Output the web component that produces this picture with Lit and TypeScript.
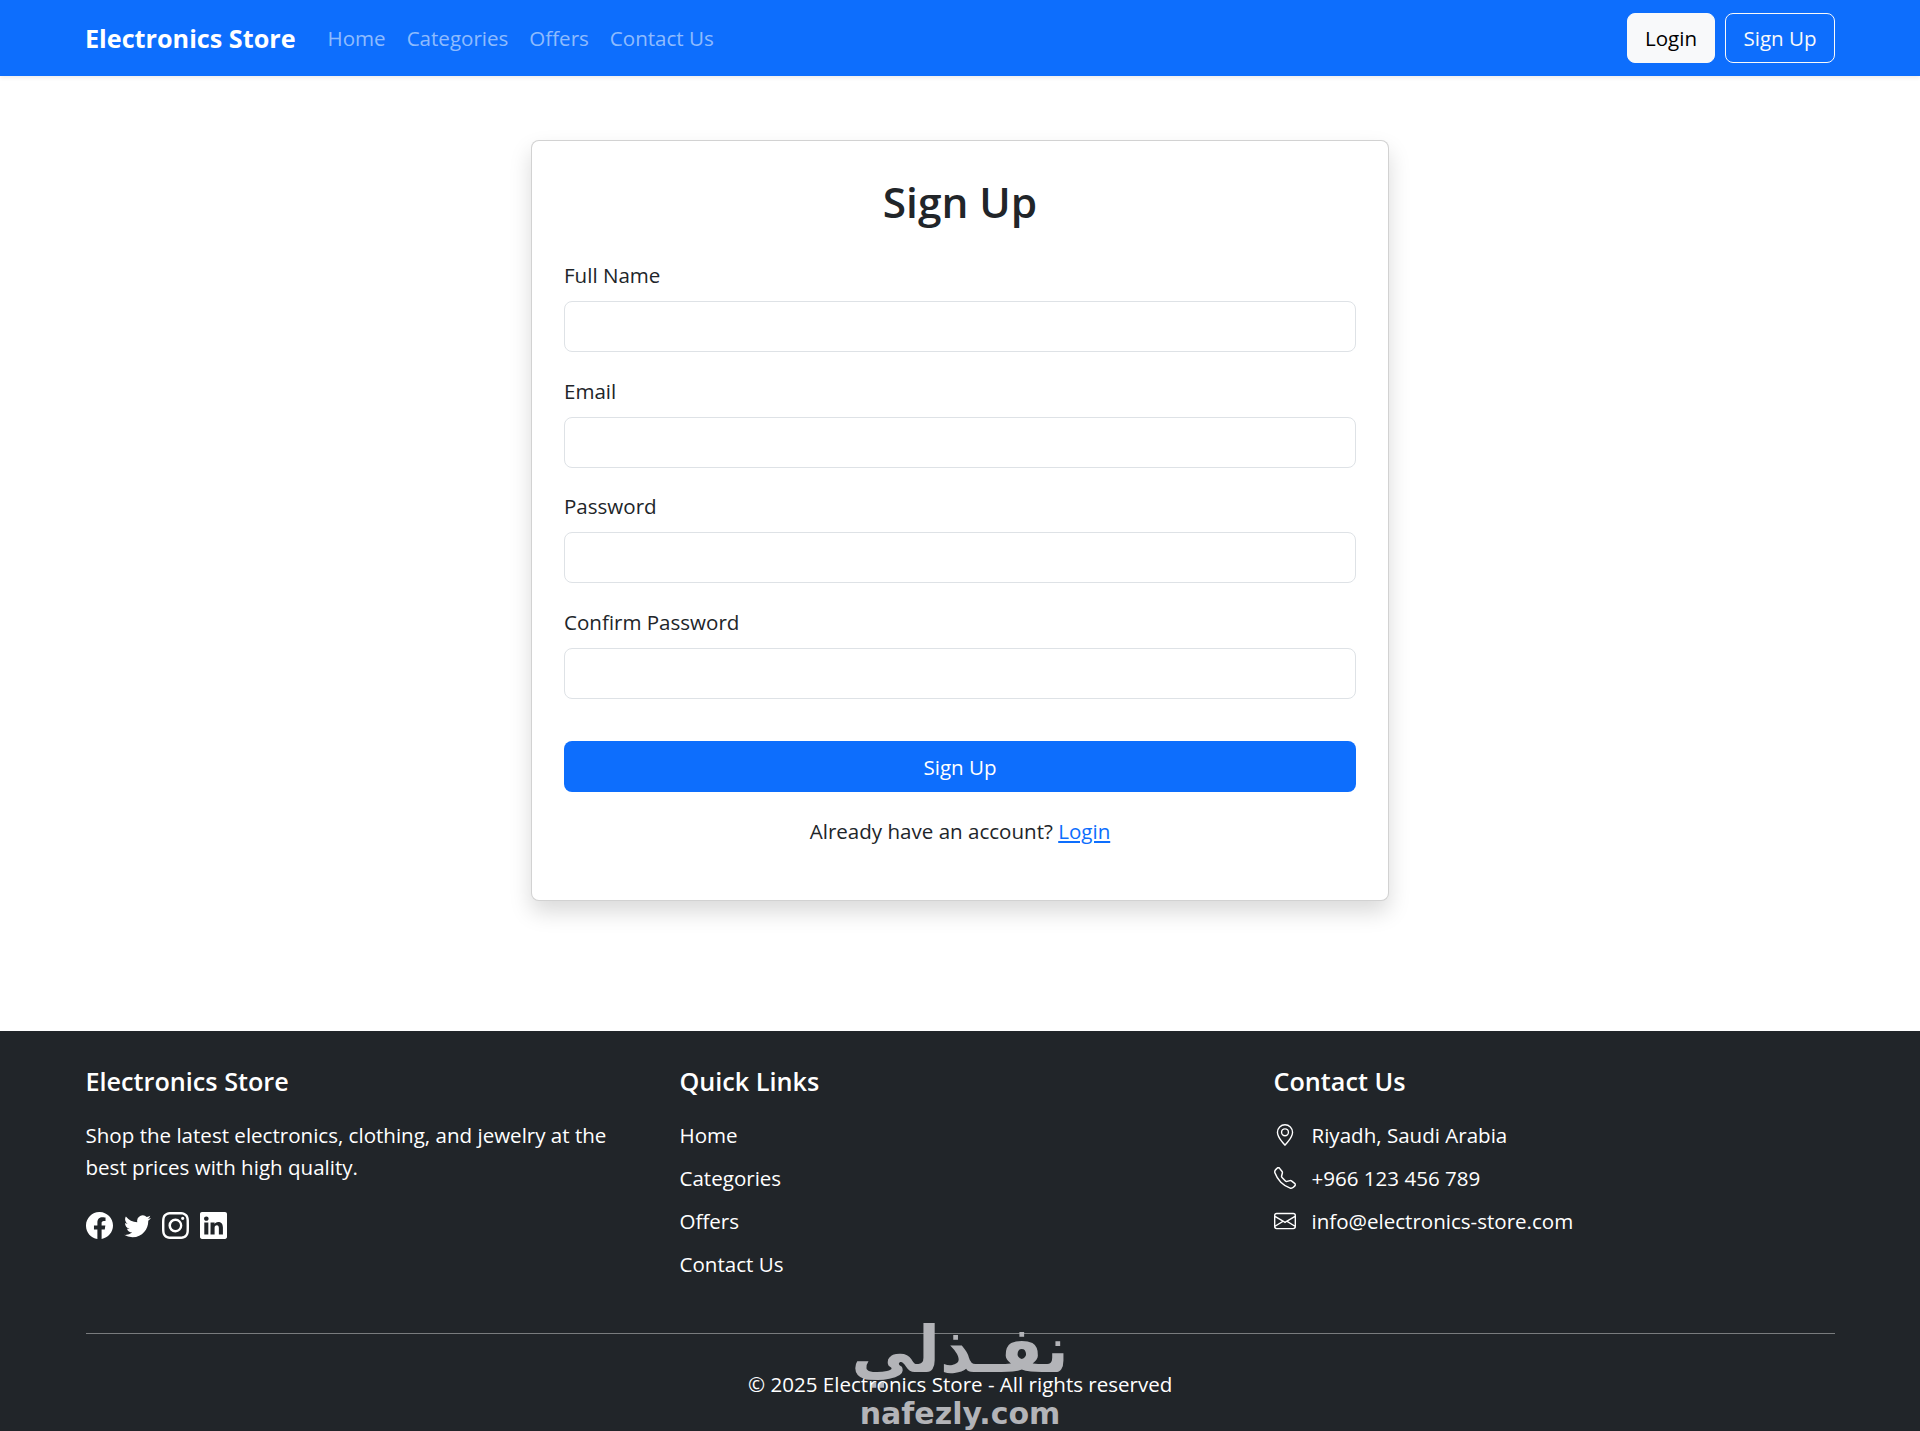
import { LitElement, html, css, svg } from "lit";
import { customElement } from "lit/decorators.js";

const icon = (paths: string[], cls = "") => html`<svg class=${cls} viewBox="0 0 16 16" fill="currentColor" aria-hidden="true">${paths.map((d) => svg`<path d=${d}></path>`)}</svg>`;

const I = {
  facebook: ["M16 8.049c0-4.446-3.582-8.05-8-8.05C3.58 0-.002 3.603-.002 8.05c0 4.017 2.926 7.347 6.75 7.951v-5.625h-2.03V8.05H6.75V6.275c0-2.017 1.195-3.131 3.022-3.131.876 0 1.791.157 1.791.157v1.98h-1.009c-.993 0-1.303.621-1.303 1.258v1.51h2.218l-.354 2.326H9.25V16c3.824-.604 6.75-3.934 6.75-7.951z"],
  twitter: ["M5.026 15c6.038 0 9.341-5.003 9.341-9.334 0-.14 0-.282-.006-.422A6.685 6.685 0 0 0 16 3.542a6.658 6.658 0 0 1-1.889.518 3.301 3.301 0 0 0 1.447-1.817 6.533 6.533 0 0 1-2.087.793A3.286 3.286 0 0 0 7.875 6.03a9.325 9.325 0 0 1-6.767-3.429 3.289 3.289 0 0 0 1.018 4.382A3.323 3.323 0 0 1 .64 6.575v.045a3.288 3.288 0 0 0 2.632 3.218 3.203 3.203 0 0 1-.865.115 3.23 3.23 0 0 1-.614-.057 3.283 3.283 0 0 0 3.067 2.277A6.588 6.588 0 0 1 .78 13.58a6.32 6.32 0 0 1-.78-.045A9.344 9.344 0 0 0 5.026 15z"],
  instagram: ["M8 0C5.829 0 5.556.01 4.703.048 3.85.088 3.269.222 2.76.42a3.917 3.917 0 0 0-1.417.923A3.927 3.927 0 0 0 .42 2.76C.222 3.268.087 3.85.048 4.7.01 5.555 0 5.827 0 8.001c0 2.172.01 2.444.048 3.297.04.852.174 1.433.372 1.942.205.526.478.972.923 1.417.444.445.89.719 1.416.923.51.198 1.09.333 1.942.372C5.555 15.99 5.827 16 8 16s2.444-.01 3.298-.048c.851-.04 1.434-.174 1.943-.372a3.916 3.916 0 0 0 1.416-.923c.445-.445.718-.891.923-1.417.197-.509.332-1.09.372-1.942C15.99 10.445 16 10.173 16 8s-.01-2.445-.048-3.299c-.04-.851-.175-1.433-.372-1.941a3.926 3.926 0 0 0-.923-1.417A3.911 3.911 0 0 0 13.24.42c-.51-.198-1.092-.333-1.943-.372C10.443.01 10.172 0 7.998 0h.003zm-.717 1.442h.718c2.136 0 2.389.007 3.232.046.78.035 1.204.166 1.486.275.373.145.64.319.92.599.28.28.453.546.598.92.11.281.24.705.275 1.485.039.843.047 1.096.047 3.231s-.008 2.389-.047 3.232c-.035.78-.166 1.203-.275 1.485a2.47 2.47 0 0 1-.599.919c-.28.28-.546.453-.92.598-.28.11-.704.24-1.485.276-.843.038-1.096.047-3.232.047s-2.39-.009-3.233-.047c-.78-.036-1.203-.166-1.485-.276a2.478 2.478 0 0 1-.92-.598 2.48 2.48 0 0 1-.6-.92c-.109-.281-.24-.705-.275-1.485-.038-.843-.046-1.096-.046-3.233 0-2.136.008-2.388.046-3.231.036-.78.166-1.204.276-1.486.145-.373.319-.64.599-.92.28-.28.546-.453.92-.598.282-.11.705-.24 1.485-.276.738-.034 1.024-.044 2.515-.045v.002zm4.988 1.328a.96.96 0 1 0 0 1.92.96.96 0 0 0 0-1.92zm-4.27 1.122a4.109 4.109 0 1 0 0 8.217 4.109 4.109 0 0 0 0-8.217zm0 1.441a2.667 2.667 0 1 1 0 5.334 2.667 2.667 0 0 1 0-5.334z"],
  linkedin: ["M0 1.146C0 .513.526 0 1.175 0h13.65C15.474 0 16 .513 16 1.146v13.708c0 .633-.526 1.146-1.175 1.146H1.175C.526 16 0 15.487 0 14.854V1.146zm4.943 12.248V6.169H2.542v7.225h2.401zm-1.2-8.212c.837 0 1.358-.554 1.358-1.248-.015-.709-.52-1.248-1.342-1.248-.822 0-1.359.54-1.359 1.248 0 .694.521 1.248 1.327 1.248h.016zm4.908 8.212V9.359c0-.216.016-.432.08-.586.173-.431.568-.878 1.232-.878.869 0 1.216.662 1.216 1.634v3.865h2.401V9.25c0-2.22-1.184-3.252-2.764-3.252-1.274 0-1.845.7-2.165 1.193v.025h-.016a5.54 5.54 0 0 1 .016-.025V6.169h-2.4c.03.678 0 7.225 0 7.225h2.4z"],
  geo: ["M12.166 8.94c-.524 1.062-1.234 2.12-1.96 3.07A31.493 31.493 0 0 1 8 14.58a31.481 31.481 0 0 1-2.206-2.57c-.726-.95-1.436-2.008-1.96-3.07C3.304 7.867 3 6.862 3 6a5 5 0 0 1 10 0c0 .862-.305 1.867-.834 2.94zM8 16s6-5.686 6-10A6 6 0 0 0 2 6c0 4.314 6 10 6 10z", "M8 8a2 2 0 1 1 0-4 2 2 0 0 1 0 4zm0 1a3 3 0 1 0 0-6 3 3 0 0 0 0 6z"],
  phone: ["M3.654 1.328a.678.678 0 0 0-1.015-.063L1.605 2.3c-.483.484-.661 1.169-.45 1.77a17.568 17.568 0 0 0 4.168 6.608 17.569 17.569 0 0 0 6.608 4.168c.601.211 1.286.033 1.77-.45l1.034-1.034a.678.678 0 0 0-.063-1.015l-2.307-1.794a.678.678 0 0 0-.58-.122l-2.19.547a1.745 1.745 0 0 1-1.657-.459L5.482 8.062a1.745 1.745 0 0 1-.46-1.657l.548-2.19a.678.678 0 0 0-.122-.58L3.654 1.328zM1.884.511a1.745 1.745 0 0 1 2.612.163L6.29 2.98c.329.423.445.974.315 1.494l-.547 2.19a.678.678 0 0 0 .178.643l2.457 2.457a.678.678 0 0 0 .644.178l2.189-.547a1.745 1.745 0 0 1 1.494.315l2.306 1.794c.829.645.905 1.87.163 2.611l-1.034 1.034c-.74.74-1.846 1.065-2.877.702a18.634 18.634 0 0 1-7.01-4.42 18.634 18.634 0 0 1-4.42-7.009c-.362-1.03-.037-2.137.703-2.877L1.885.511z"],
  mail: ["M0 4a2 2 0 0 1 2-2h12a2 2 0 0 1 2 2v8a2 2 0 0 1-2 2H2a2 2 0 0 1-2-2V4Zm2-1a1 1 0 0 0-1 1v.217l7 4.2 7-4.2V4a1 1 0 0 0-1-1H2Zm13 2.383-4.708 2.825L15 11.105V5.383Zm-.034 6.876-5.64-3.471L8 9.583l-1.326-.795-5.64 3.47A1 1 0 0 0 2 13h12a1 1 0 0 0 .966-.741ZM1 11.105l4.708-2.897L1 5.383v5.722Z"],
};

@customElement("app-root")
export class AppRoot extends LitElement {
  static styles = css`
    :host { display: block; font-family: "Open Sans", "Liberation Sans", sans-serif; font-size: 20.55px; color: #212529; background: #fff; }
    * { box-sizing: border-box; }
    a { text-decoration: none; color: inherit; }
    .nav { height: 76px; background: #0d6efd; display: flex; align-items: center; padding: 0 85px; box-shadow: 0 2px 4px rgba(0,0,0,.075); position: relative; }
    .brand { color: #fff; font-weight: 700; font-size: 25.2px; margin-right: 32px; }
    .links { display: flex; gap: 21px; flex: 1; }
    .links a { color: rgba(255,255,255,.55); }
    .btn { height: 50px; border-radius: 8px; display: flex; align-items: center; justify-content: center; border: 1px solid #f8f9fa; }
    .btn-light { width: 88px; background: #f8f9fa; color: #000; margin-right: 10px; }
    .btn-outline { width: 110px; color: #f8f9fa; }
    .main { padding: 64px 0 130px; display: flex; justify-content: center; }
    .card { width: 858px; height: 761px; border: 1px solid rgba(0,0,0,.175); border-radius: 8px; padding: 32px; box-shadow: 0 11px 22px rgba(0,0,0,.15); background: #fff; display: flex; flex-direction: column; }
    h2 { margin: 0 0 29px; font-size: 42.4px; font-weight: 600; line-height: 58px; text-align: center; }
    .field { display: flex; flex-direction: column; height: 115.5px; }
    label { height: 32px; line-height: 30px; margin-bottom: 9px; }
    input { height: 51px; width: 100%; border: 1px solid #dee2e6; border-radius: 8px; background: #fff; display: block; }
    .submit { margin-top: 19px; height: 51px; border-radius: 8px; background: #0d6efd; border: 0; color: #fff; font: inherit; }
    .already { text-align: center; margin-top: 23px; line-height: 32px; }
    .already a { color: #0d6efd; text-decoration: underline; }
    .footer { position: relative; background: #212529; color: #fff; height: 401px; padding: 33px 85px 0 85.5px; }
    .cols { display: grid; grid-template-columns: 594px 594px 1fr; height: 239px; }
    h5 { margin: 0 0 21px; font-size: 25.2px; font-weight: 600; line-height: 34px; }
    p { margin: 0; line-height: 32px; max-width: 540px; }
    .social { display: flex; gap: 11px; margin-top: 29px; }
    .social svg { width: 27px; height: 27px; display: block; }
    .list { display: flex; flex-direction: column; gap: 11px; line-height: 32px; }
    .contact { display: flex; align-items: center; gap: 16px; }
    .contact svg { width: 22px; height: 22px; flex: none; }
    .rule { border-top: 1px solid rgba(255,255,255,.4); height: 1px; margin-top: 30px; }
    .copy { text-align: center; margin-top: 34px; line-height: 32px; position: relative; }
    .mark { position: absolute; left: 854px; top: 279px; width: 212px; height: 120px; color: #b3b4b8; display: flex; flex-direction: column; align-items: center; pointer-events: none; }
    .mark-ar { font-family: "DejaVu Sans", sans-serif; font-weight: 700; font-size: 64px; line-height: 80px; white-space: nowrap; }
    .mark-en { font-family: "DejaVu Sans", sans-serif; font-weight: 700; font-size: 30px; line-height: 32px; white-space: nowrap; margin-top: 8px; }
  `;

  render() {
    const fields = ["Full Name", "Email", "Password", "Confirm Password"];
    return html`
      <nav class="nav">
        <a class="brand" href="#">Electronics Store</a>
        <div class="links">
          <a href="#">Home</a><a href="#">Categories</a><a href="#">Offers</a><a href="#">Contact Us</a>
        </div>
        <a class="btn btn-light" href="#">Login</a>
        <a class="btn btn-outline" href="#">Sign Up</a>
      </nav>
      <main class="main">
        <form class="card" @submit=${(e: Event) => e.preventDefault()}>
          <h2>Sign Up</h2>
          ${fields.map((f) => html`<div class="field"><label>${f}</label><input type=${f.includes("Password") ? "password" : f === "Email" ? "email" : "text"} /></div>`)}
          <button class="submit">Sign Up</button>
          <div class="already">Already have an account? <a href="#">Login</a></div>
        </form>
      </main>
      <footer class="footer">
        <div class="mark"><div class="mark-ar" dir="rtl">نفـذلي</div><div class="mark-en">nafezly.com</div></div>
        <div class="cols">
          <div>
            <h5>Electronics Store</h5>
            <p>Shop the latest electronics, clothing, and jewelry at the best prices with high quality.</p>
            <div class="social">${icon(I.facebook)}${icon(I.twitter)}${icon(I.instagram)}${icon(I.linkedin)}</div>
          </div>
          <div>
            <h5>Quick Links</h5>
            <div class="list"><a href="#">Home</a><a href="#">Categories</a><a href="#">Offers</a><a href="#">Contact Us</a></div>
          </div>
          <div>
            <h5>Contact Us</h5>
            <div class="list">
              <div class="contact">${icon(I.geo)}<span>Riyadh, Saudi Arabia</span></div>
              <div class="contact">${icon(I.phone)}<span>+966 123 456 789</span></div>
              <div class="contact">${icon(I.mail)}<span>info@electronics-store.com</span></div>
            </div>
          </div>
        </div>
        <div class="rule"></div>
        <div class="copy">© 2025 Electronics Store - All rights reserved</div>
      </footer>
    `;
  }
}
